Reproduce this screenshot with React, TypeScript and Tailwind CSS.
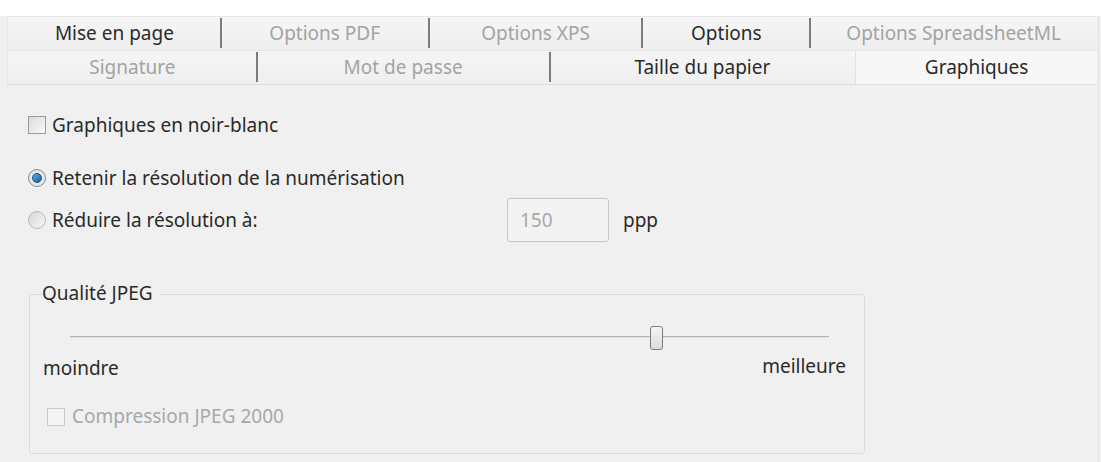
import React from "react";

const font = { fontFamily: '"Noto Sans", "Open Sans", sans-serif' };

function Tab({ w, label, enabled, sep, selected }: { w: string; label: string; enabled: boolean; sep: boolean; selected?: boolean }) {
  return (
    <div className={`${w} h-full flex items-center justify-center relative ${selected ? "bg-[#f7f7f7] border-l border-[#e2e2e2]" : ""}`}>
      <span className={`text-[19px] leading-none ${enabled ? "text-[#2a2a2a]" : "text-[#a3a3a3]"}`}>{label}</span>
      {sep && <div className="absolute right-[-1px] top-[1px] bottom-[2px] w-[2px] bg-[#7c7c7c]" />}
    </div>
  );
}

function Checkbox({ disabled }: { disabled?: boolean }) {
  return (
    <div className={`w-[18px] h-[18px] border ${disabled ? "border-[#c9c9c9] bg-[#f4f4f4]" : "border-[#9a9a9a] bg-gradient-to-br from-[#dcdcdc] to-[#f8f8f8]"}`} />
  );
}

function Radio({ checked }: { checked?: boolean }) {
  return (
    <div className={`w-[18px] h-[18px] rounded-full border flex items-center justify-center ${checked ? "border-[#8a8a8a] bg-[#e8e8e8]" : "border-[#b8b8b8] bg-gradient-to-br from-[#d8d8d8] to-[#f6f6f6]"}`}>
      {checked && <div className="w-[10px] h-[10px] rounded-full bg-gradient-to-br from-[#5ab0ea] to-[#1a5d96] border border-[#1b4f7c]" />}
    </div>
  );
}

export default function App() {
  return (
    <div className="w-[1101px] h-[462px] bg-[#f0f0f0] overflow-hidden relative" style={font}>
      <div className="h-[16px] bg-white" />
      {/* tabs */}
      <div className="pl-[7px] pr-[4px]">
        <div className="h-[34px] flex border-t border-[#dedede] bg-gradient-to-b from-[#f6f6f6] to-[#eeeeee] border-l border-[#e6e6e6]">
          <Tab w="w-[213px]" label="Mise en page" enabled sep />
          <Tab w="w-[208px]" label="Options PDF" enabled={false} sep />
          <Tab w="w-[214px]" label="Options XPS" enabled={false} sep />
          <Tab w="w-[168px]" label="Options" enabled sep />
          <Tab w="w-[287px]" label="Options SpreadsheetML" enabled={false} sep={false} />
        </div>
        <div className="h-[35px] flex border-t border-[#e4e4e4] bg-gradient-to-b from-[#f5f5f5] to-[#efefef] border-l border-[#e6e6e6] border-b border-b-[#e0e0e0]">
          <Tab w="w-[249px]" label="Signature" enabled={false} sep />
          <Tab w="w-[293px]" label="Mot de passe" enabled={false} sep />
          <Tab w="w-[306px]" label="Taille du papier" enabled sep={false} />
          <Tab w="w-[242px]" label="Graphiques" enabled sep={false} selected />
        </div>
      </div>
      <div className="absolute right-[2px] top-[16px] bottom-0 w-px bg-[#e2e2e2]" />

      {/* content */}
      <div className="pl-[28px] pt-[30px] text-[#2a2a2a] text-[19px]">
        <div className="flex items-center gap-[6px] h-[20px]">
          <Checkbox />
          <span className="leading-none">Graphiques en noir-blanc</span>
        </div>
        <div className="flex items-center gap-[6px] h-[20px] mt-[33px]">
          <Radio checked />
          <span className="leading-none">Retenir la résolution de la numérisation</span>
        </div>
        <div className="flex items-center h-[44px] mt-[10px]">
          <div className="flex items-center gap-[6px] w-[479px]">
            <Radio />
            <span className="leading-none">Réduire la résolution à:</span>
          </div>
          <div className="w-[102px] h-[44px] border border-[#c6c6c6] rounded-[3px] bg-[#f3f3f3] flex items-center pl-[12px]">
            <span className="text-[#a8a8a8] leading-none">150</span>
          </div>
          <span className="ml-[14px] leading-none">ppp</span>
        </div>

        {/* group box */}
        <div className="relative mt-[52px] ml-[1px] w-[836px] h-[160px] border border-[#dcdcdc] rounded-[3px]">
          <span className="absolute left-[12px] top-[-11px] bg-[#f0f0f0] pr-[6px] leading-none">Qualité JPEG</span>
          <div className="absolute left-[40px] right-[35px] top-[41px] h-[2px] bg-[#b4b4b4] border-b border-[#e0e0e0]" />
          <div className="absolute left-[620px] top-[31px] w-[13px] h-[24px] rounded-[3px] border border-[#7c7c7c] bg-gradient-to-b from-[#f4f4f4] to-[#dcdcdc]" />
          <span className="absolute left-[13px] top-[64px] leading-none">moindre</span>
          <span className="absolute right-[18px] top-[62px] leading-none">meilleure</span>
          <div className="absolute left-[17px] top-[112px] flex items-center gap-[7px]">
            <Checkbox disabled />
            <span className="text-[#a8a8a8] leading-none">Compression JPEG 2000</span>
          </div>
        </div>
      </div>
    </div>
  );
}
